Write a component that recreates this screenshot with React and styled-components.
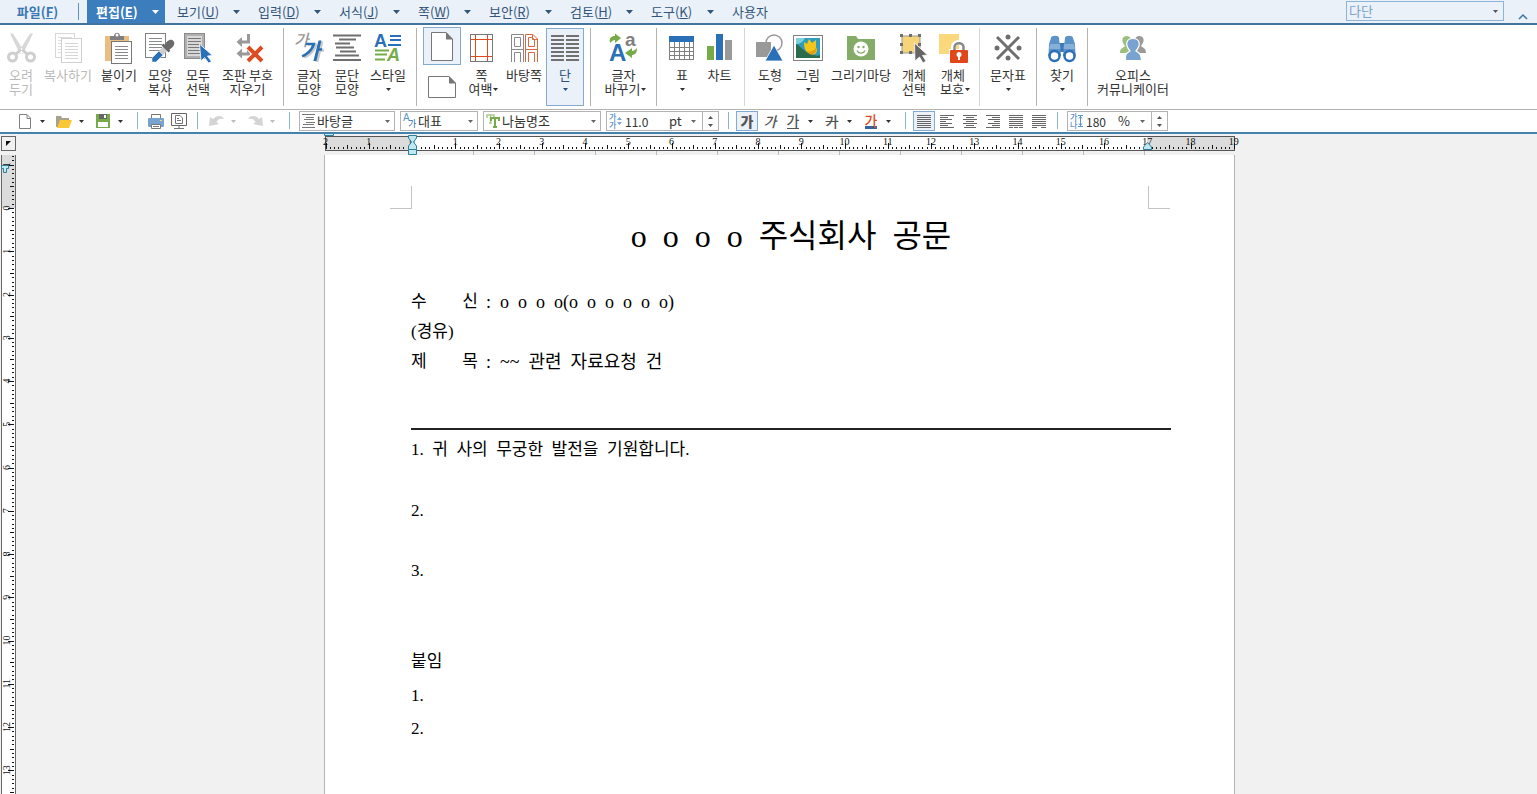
import styled, { createGlobalStyle } from "styled-components";

const GlobalStyle = createGlobalStyle`
    * {
        box-sizing: border-box;
    }
    body {
        margin: 0;
        background: #f1f1f1;
        font-family: "Noto Sans CJK KR", sans-serif;
        font-size: 13px;
        color: #333;
    }
    button, select, input {
        font: inherit;
        color: inherit;
        margin: 0;
        padding: 0;
        border: none;
        background: none;
        border-radius: 0;
        outline: none;
    }
    svg {
        display: block;
        flex: none;
        overflow: visible;
    }
`

const Window = styled.div`
    display: flex;
    flex-direction: column;
    height: 100vh;
    overflow: hidden;
`

/* menu bar */
const MenuBar = styled.nav`
    display: flex;
    height: 25px;
    flex: none;
    background: #eaf1f8;
    border-bottom: 2px solid #41759f;
`
const MenuItem = styled.button`
    display: flex;
    align-items: center;
    justify-content: space-between;
    width: ${p => p.$w || 61}px;
    margin-right: 18px;
    height: 23px;
    line-height: 23px;
    color: #34557a;
    white-space: nowrap;
`
const FileItem = styled.button`
    width: 79px;
    padding-right: 4px;
    margin-right: 8px;
    height: 23px;
    line-height: 23px;
    font-weight: bold;
    color: #3a78b4;
    position: relative;
    &::after {
        content: '';
        position: absolute;
        right: 0;
        top: 3px;
        height: 17px;
        width: 1px;
        background: #5d93c4;
    }
`
const ActiveItem = styled(MenuItem)`
    width: 78px;
    margin-right: 12px;
    padding: 0 6px 0 9px;
    background: #3b7dbd;
    color: #fff;
    font-weight: bold;
`
const StyleBox = styled.div`
    display: flex;
    align-items: center;
    width: 158px;
    height: 20px;
    margin: 1px 14px 0 auto;
    padding: 0 5px 0 2px;
    border: 1px solid #8db4d8;
    color: #7ba3cc;
`
const Collapse = styled.button`
    display: flex;
    align-items: flex-end;
    width: 19px;
    padding: 0 0 3px 0;
`

/* ribbon */
const Ribbon = styled.div`
    display: flex;
    flex: none;
    height: 85px;
    padding: 3px 0 3px 2px;
    background: #fff;
    border-bottom: 1px solid #b3b3b3;
`
const Group = styled.div`
    display: flex;
    flex: none;
    padding: 0 6px;
    border-right: 1px solid ${p => (p.$light ? "#d6d6d6" : "#b3b3b3")};
    &:first-child {
        padding-left: 0;
    }
    &:last-child {
        border-right: none;
    }
`
const RibbonButton = styled.button`
    display: flex;
    flex-direction: column;
    align-items: center;
    width: ${p => p.$w}px;
    height: 78px;
    padding-top: 3px;
    border: 1px solid ${p => (p.$on ? "#84aacf" : "transparent")};
    background: ${p => (p.$on ? "#eaf1f8" : "none")};
    color: ${p => (p.$off ? "#b9b9b9" : p.$on ? "#2c4f7c" : "#333")};
`
const Caption = styled.span`
    display: flex;
    align-items: center;
    height: 14px;
    line-height: 14px;
    white-space: nowrap;
    gap: 1px;
    padding-left: ${p => (p.$inline ? 4 : 0)}px;
    &:first-of-type {
        margin-top: 4px;
    }
`
const PageColumn = styled.div`
    display: flex;
    flex-direction: column;
    gap: 6px;
    margin-top: -1px;
`
const PageButton = styled.button`
    display: flex;
    align-items: center;
    justify-content: center;
    width: 38px;
    height: ${p => (p.$on ? 38 : 32)}px;
    border: 1px solid ${p => (p.$on ? "#84aacf" : "transparent")};
    background: ${p => (p.$on ? "#eaf1f8" : "none")};
`

/* quick toolbar */
const Toolbar = styled.div`
    display: flex;
    flex: none;
    height: 24px;
    background: #fff;
    border-bottom: 2px solid #4482ad;
`
const Tools = styled.div`
    display: flex;
    align-items: center;
    flex: none;
    gap: ${p => (p.$wide ? 5 : 1)}px;
    padding: 0 ${p => (p.$wide ? 9 : 7)}px;
    &:first-child {
        padding-left: 14px;
    }
`
const Rule = styled.span`
    width: 1px;
    height: 17px;
    margin-top: 2px;
    background: #8db4cf;
`
const Split = styled.span`
    display: flex;
    margin-right: 4px;
`
const Tool = styled.button`
    display: flex;
    align-items: center;
    justify-content: center;
    width: 22px;
    height: 20px;
    border: 1px solid ${p => (p.$on ? "#84aacf" : "transparent")};
    background: ${p => (p.$on ? "#eaf1f8" : "none")};
`
const Drop = styled.button`
    display: flex;
    align-items: center;
    justify-content: center;
    width: 12px;
    height: 20px;
`
const Glyph = styled.span`
    display: block;
    line-height: 14px;
    height: ${p => (p.$bar ? 16 : 15)}px;
    font-size: 14px;
    font-weight: ${p => (p.$bold ? 900 : 500)};
    font-style: ${p => (p.$italic ? "italic" : "normal")};
    text-decoration: ${p => (p.$strike ? "line-through" : "none")};
    color: ${p => p.$color || "#555"};
    border-bottom: ${p => p.$bar || "none"};
`
const Combo = styled.div`
    display: flex;
    align-items: center;
    width: ${p => p.$w}px;
    height: 20px;
    padding-left: 2px;
    gap: 2px;
    border: 1px solid #b3b3b3;
`
const Select = styled.select`
    appearance: none;
    flex: 1;
    min-width: 0;
    height: 18px;
    line-height: 18px;
`
const NumberInput = styled.input`
    width: ${p => p.$w}px;
    height: 18px;
    font-size: 12px;
`
const ArrowCell = styled.span`
    display: flex;
    justify-content: center;
    width: 14px;
    flex: none;
`
const Spinner = styled.span`
    display: flex;
    flex-direction: column;
    justify-content: center;
    width: 16px;
    height: 18px;
    flex: none;
    border-left: 1px solid #b3b3b3;
`
const Spin = styled.button`
    display: flex;
    align-items: center;
    justify-content: center;
    height: 8px;
`

/* document area */
const Workspace = styled.main`
    display: flex;
    flex: 1;
    min-height: 0;
    overflow: hidden;
`
const Side = styled.aside`
    width: 17px;
    flex: none;
    padding: 2px 0 0 1px;
`
const Corner = styled.button`
    display: flex;
    align-items: center;
    justify-content: center;
    width: 15px;
    height: 15px;
    margin-bottom: 4px;
    border: 1px solid #666;
`
const Canvas = styled.div`
    flex: 1;
    padding-left: 5px;
    display: flex;
    flex-direction: column;
    align-items: center;
`
const Sheet = styled.div`
    width: 911px;
    flex: 1;
    display: flex;
    flex-direction: column;
`
const Paper = styled.article`
    flex: 1;
    padding: 31px 63px 0 86px;
    background: #fff;
    border: solid #b4b4b4;
    border-width: 0 1px;
    font-family: "Liberation Serif", "Noto Sans CJK KR", serif;
    font-size: 17px;
    line-height: 30px;
    color: #000;
    white-space: pre-wrap;
`
const Marks = styled.div`
    display: flex;
    justify-content: space-between;
    margin: 0 1px 0 -21px;
`
const Mark = styled.span`
    width: 22px;
    height: 23px;
    border: solid #c4c4c4;
    border-width: ${p => (p.$right ? "0 0 1px 1px" : "0 1px 1px 0")};
`
const Title = styled.h1`
    margin: 7px 0 31px;
    font-size: 32px;
    line-height: 40px;
    font-weight: normal;
    text-align: center;
`
const Meta = styled.dl`
    display: grid;
    grid-template-columns: 67px 1fr;
    grid-auto-rows: 30px;
    margin: 0;
`
const Name = styled.dt`
    display: flex;
    justify-content: space-between;
`
const Value = styled.dd`
    margin: 0 0 0 8px;
    font-size: 18px;
`
const Line = styled.hr`
    height: 2px;
    margin: 51px 0 5px;
    border: none;
    background: #222;
`
const Body = styled.p`
    margin: 0 0 ${p => p.$after || 0}px;
`

const Shaded = styled.text`
    filter: drop-shadow(2px 1px 0 #c9c9c9);
`

const Arrow = ({ size = 5, color = "#333", up }) => (
    <svg width={size} height={(size + 1) / 2} viewBox="0 0 10 5" preserveAspectRatio="none">
        <path d={up ? "M0 5L5 0L10 5Z" : "M0 0H10L5 5Z"} fill={color} />
    </svg>
)

const Icon = ({ children }) => (
    <svg width="32" height="32" viewBox="0 0 32 32" fill="none">{children}</svg>
)

// horizontal text lines inside the little page pictures
const Lines = ({ x1, x2, from, count, step = 3, color = "#8a8a8a", w = 1 }) => (
    <path
        d={Array.from({ length: count }, (_, i) => `M${x1} ${from + i * step}H${x2}`).join("")}
        stroke={color}
        strokeWidth={w}
    />
)

const font = { sans: '"Liberation Sans", sans-serif', kr: '"Noto Sans CJK KR", sans-serif' }

const icons = {
    cut: (
        <Icon>
            <path d="M5 1.500L8 1.500L19.500 20L15 22Z M28 1.500L25 1.500L13.500 20L18 22Z" fill="#d8d8d8" />
            <circle cx="7.500" cy="25" r="4" stroke="#cfcfcf" strokeWidth="3" />
            <circle cx="25.500" cy="25" r="4" stroke="#cfcfcf" strokeWidth="3" />
            <path d="M11 22L16.500 17L22 22" stroke="#cfcfcf" strokeWidth="3" />
            <circle cx="16.500" cy="17" r="1" fill="#fff" />
        </Icon>
    ),
    copy: (
        <Icon>
            <rect x="3.500" y="1.500" width="19" height="24" stroke="#d6d6d6" />
            <Lines x1={6} x2={20} from={5.5} count={6} color="#dedede" />
            <rect x="9.500" y="6.500" width="20" height="24" fill="#fff" stroke="#d0d0d0" />
            <Lines x1={13} x2={26} from={11.5} count={6} color="#d6d6d6" />
        </Icon>
    ),
    paste: (
        <Icon>
            <rect x="2" y="4" width="24" height="25" fill="#e9be80" />
            <path d="M7 8V4H11C11 -0.500 17 -0.500 17 4H21V8Z" fill="#808080" />
            <circle cx="14" cy="3" r="1.500" fill="#fff" />
            <rect x="8.500" y="9.500" width="20" height="22" fill="#fff" stroke="#777" />
            <Lines x1={12} x2={25} from={14.5} count={5} />
        </Icon>
    ),
    shapeCopy: (
        <Icon>
            <rect x="1.500" y="1.500" width="20" height="24" fill="#fff" stroke="#808080" />
            <Lines x1={5} x2={18} from={6.5} count={5} />
            <path d="M8 30V26L15 19L19 23L12 30Z" fill="#2a70b8" stroke="#fff" strokeWidth="0.500" />
            <path d="M15 19L20 14L24 18L19 23Z" fill="#cfcfcf" />
            <path d="M18.500 12.500L25.500 19.500" stroke="#666" strokeWidth="2.500" />
            <path d="M20 14C22 9 27 6 29.500 9C32 12 28 17 24 18Z" fill="#6a6a6a" />
        </Icon>
    ),
    selectAll: (
        <Icon>
            <rect x="2.500" y="1.500" width="20" height="25" fill="#b0b0b0" stroke="#8a8a8a" />
            <rect x="5" y="4" width="15" height="20" fill="#d8d8d8" />
            <Lines x1={6} x2={19} from={6.5} count={6} color="#777" />
            <path d="M17.500 12L30.500 23.500L25.500 24L29.500 29.500L26.500 31L22.500 25.500L19 29Z" fill="#2a70b8" stroke="#fff" strokeWidth="0.800" />
        </Icon>
    ),
    clearMarks: (
        <Icon>
            <path d="M16.500 2V10H9 M16.500 17V22H9" stroke="#999" strokeWidth="3" />
            <path d="M10 5V15L4.500 10Z M10 16.500V26.500L4.500 21.500Z" fill="#999" />
            <path d="M16 15L30 29M30 15L16 29" stroke="#fff" strokeWidth="6" />
            <path d="M16 15L30 29M30 15L16 29" stroke="#dd4b22" strokeWidth="4" />
        </Icon>
    ),
    charShape: (
        <Icon>
            <text x="1" y="14" fontFamily={font.kr} fontSize="16" fontWeight="500" fontStyle="italic" fill="#999">가</text>
            <Shaded x="7" y="27" fontFamily={font.kr} fontSize="22" fontWeight="bold" fontStyle="italic" fill="#2a70b8">가</Shaded>
        </Icon>
    ),
    paraShape: (
        <Icon>
            <path d="M2 3.500H30M8 7.500H25M4 11.500H19M5 15.500H23M9 19.500H25M4 23.500H28M2 28H30" stroke="#6f6f6f" strokeWidth="2" />
        </Icon>
    ),
    style: (
        <Icon>
            <text x="2" y="15" fontFamily={font.sans} fontSize="18" fontWeight="bold" fill="#2a70b8">A</text>
            <path d="M18 8H29M18 4H29M16 13H29" stroke="#2a70b8" strokeWidth="2" />
            <path d="M3 18.500H17M3 22.500H15M3 27.500H13" stroke="#77ab4a" strokeWidth="2" />
            <text x="15" y="29" fontFamily={font.sans} fontSize="18" fontWeight="bold" fontStyle="italic" fill="#77ab4a">A</text>
        </Icon>
    ),
    margin: (
        <Icon>
            <rect x="4.500" y="2.500" width="22" height="27" stroke="#777" />
            <path d="M9.500 3V29M21.500 3V29M5 7.500H26M5 24.500H26" stroke="#dd4b22" />
        </Icon>
    ),
    master: (
        <Icon>
            <path d="M3.500 30V17.500H15.500V30M6.500 30V20.500H12.500V30M3.500 2.500H15.500V17.500H3.500ZM6.500 5.500H12.500V14.500H6.500Z" stroke="#8a8a8a" />
            <path d="M17.500 17.500V2.500H25L29.500 7V17.500ZM20.500 14.500V5.500H24.500L26.500 8V14.500ZM24.500 3V7.500H29M17.500 30V17.500H29.500V30M20.500 30V20.500H26.500V30" stroke="#d9683f" />
        </Icon>
    ),
    columns: (
        <Icon>
            <Lines x1={2} x2={15} from={4} count={7} step={4} color="#707070" w={2} />
            <Lines x1={17} x2={30} from={4} count={7} step={4} color="#707070" w={2} />
        </Icon>
    ),
    charChange: (
        <Icon>
            <text x="1" y="29" fontFamily={font.sans} fontSize="24" fontWeight="bold" fill="#2a70b8">A</text>
            <text x="17" y="14" fontFamily={font.sans} fontSize="19" fontWeight="bold" fill="#808080">a</text>
            <path d="M2 11C1 6 3 4 7 4V1.500L13 6L7 11V8C5 8 4 9 2 11Z" fill="#77ab4a" />
            <path d="M29 16C29 21 27 23 24 23V26L17 21L24 16V19C26 19 27 18 29 16Z" fill="#77ab4a" />
        </Icon>
    ),
    table: (
        <Icon>
            <rect x="3.500" y="4.500" width="24" height="23" fill="#fff" stroke="#808080" />
            <path d="M3 15.500H28M3 19.500H28M3 23.500H28M8.500 10V28M13.500 10V28M18.500 10V28M23.500 10V28" stroke="#808080" />
            <rect x="3" y="4" width="25" height="6" fill="#2a70b8" />
        </Icon>
    ),
    chart: (
        <Icon>
            <rect x="3" y="14" width="7" height="14" fill="#77ab4a" />
            <rect x="12" y="2" width="7" height="26" fill="#2a70b8" />
            <rect x="21" y="8" width="7" height="20" fill="#999" />
        </Icon>
    ),
    shapes: (
        <Icon>
            <circle cx="20" cy="11" r="8" stroke="#999" strokeWidth="1.500" fill="#fff" />
            <rect x="2" y="10" width="15" height="15" fill="#999" />
            <path d="M20 13L29 29H11Z" fill="#2a70b8" stroke="#fff" strokeWidth="0.800" />
        </Icon>
    ),
    picture: (
        <Icon>
            <rect x="1.500" y="3.500" width="29" height="25" fill="#fff" stroke="#808080" />
            <rect x="4" y="6" width="24" height="20" fill="#2f9dbd" />
            <path d="M4 26V12C8 13 10 18 15 20C20 22 24 25 28 23V26Z" fill="#2c6b4c" />
            <path d="M4 6H13C11 10 8 12 4 12Z" fill="#7fd0dd" />
            <path d="M12 10L15 12L17 7L20 11L24 8L24 15C27 21 22 24 18 22C13 20 12 15 12 10Z" fill="#f5c518" />
            <path d="M14 18C18 21 22 19 24 16C25 21 21 23 18 22Z" fill="#e59b13" />
        </Icon>
    ),
    gallery: (
        <Icon>
            <path d="M2 4H11L13 7H30V28H2Z" fill="#85ab68" />
            <circle cx="16" cy="17" r="7.500" fill="#fff" />
            <circle cx="13.500" cy="15" r="1.200" fill="#85ab68" />
            <circle cx="18.500" cy="15" r="1.200" fill="#85ab68" />
            <path d="M12 18.500C13.500 22 18.500 22 20 18.500" stroke="#85ab68" strokeWidth="1.300" />
        </Icon>
    ),
    selectObject: (
        <Icon>
            <rect x="4" y="4" width="18" height="17" fill="#f6d47a" stroke="#999" />
            <path d="M2 2H5V5H2ZM11 2H14V5H11ZM20 2H23V5H20ZM2 11H5V14H2ZM20 11H23V14H20ZM2 19H5V22H2ZM11 19H14V22H11Z" fill="#707070" />
            <path d="M16.500 11L29.500 23L24.500 23.500L28 29L25 31L21.500 25L17 29Z" fill="#666" stroke="#fff" strokeWidth="0.800" />
        </Icon>
    ),
    protect: (
        <Icon>
            <rect x="2" y="2" width="20" height="20" fill="#f9d97c" />
            <path d="M16.500 18V15C16.500 9 27.500 9 27.500 15V18" stroke="#fff" strokeWidth="5" />
            <rect x="12" y="17" width="20" height="14" fill="#fff" />
            <path d="M17.500 18V15C17.500 10 26.500 10 26.500 15V18" stroke="#888" strokeWidth="2.500" />
            <rect x="13" y="18" width="18" height="13" rx="1" fill="#e2461b" />
            <circle cx="22" cy="22.500" r="2.500" fill="#fff" />
            <path d="M21 23H23V28H21Z" fill="#fff" />
        </Icon>
    ),
    symbols: (
        <Icon>
            <path d="M5 5L27 27M27 5L5 27" stroke="#6f6f6f" strokeWidth="3" />
            <circle cx="16" cy="5" r="2.500" fill="#6f6f6f" />
            <circle cx="16" cy="26" r="2.500" fill="#6f6f6f" />
            <circle cx="5" cy="16" r="2.500" fill="#6f6f6f" />
            <circle cx="27" cy="16" r="2.500" fill="#6f6f6f" />
        </Icon>
    ),
    find: (
        <Icon>
            <rect x="11" y="11" width="10" height="9" fill="#3f79b5" />
            <path d="M5 6C5 3 13 3 13 6L15 24H2.500L3 12Z M27 6C27 3 19 3 19 6L17 24H29.500L29 12Z" fill="#5b92c8" />
            <path d="M4 12H14L14.500 17H3Z M28 12H18L17.500 17H29Z" fill="#86b0d8" />
            <circle cx="8.500" cy="24" r="5" fill="#fff" stroke="#2a70b8" strokeWidth="2.500" />
            <circle cx="23.500" cy="24" r="5" fill="#fff" stroke="#2a70b8" strokeWidth="2.500" />
        </Icon>
    ),
    people: (
        <Icon>
            <path d="M3 21C3 16 6 16 8 14C3 8 6 4 9.500 4C14 4 16 9 12 14V21Z" fill="#9cc080" />
            <path d="M29 21C29 16 26 16 24 14C29 8 26 4 22.500 4C18 4 16 9 20 14V21Z" fill="#9a9a9a" />
            <path d="M8.500 28.500C8 21 10 21 13 19C7 12 10 6.500 16 6.500C22 6.500 25 12 19 19C22 21 24 21 24.500 28.500Z" fill="#78a2cf" stroke="#fff" strokeWidth="1.200" />
        </Icon>
    ),
}

const ribbon = [
    [
        { icon: "cut", text: ["오려", "두기"], w: 38, off: true },
        { icon: "copy", text: ["복사하기"], w: 56, off: true },
        { icon: "paste", text: ["붙이기"], w: 46, drop: true },
        { icon: "shapeCopy", text: ["모양", "복사"], w: 36 },
        { icon: "selectAll", text: ["모두", "선택"], w: 40 },
        { icon: "clearMarks", text: ["조판 부호", "지우기"], w: 59 },
    ],
    [
        { icon: "charShape", text: ["글자", "모양"], w: 38 },
        { icon: "paraShape", text: ["문단", "모양"], w: 38 },
        { icon: "style", text: ["스타일"], w: 44, drop: true },
    ],
    [
        { pages: true },
        { icon: "margin", text: ["쪽", "여백"], w: 41, drop: true },
        { icon: "master", text: ["바탕쪽"], w: 44 },
        { icon: "columns", text: ["단"], w: 38, drop: true, on: true },
    ],
    [{ icon: "charChange", text: ["글자", "바꾸기"], w: 53, drop: true }],
    [
        { icon: "table", text: ["표"], w: 38, drop: true },
        { icon: "chart", text: ["차트"], w: 37 },
    ],
    [
        { icon: "shapes", text: ["도형"], w: 38, drop: true },
        { icon: "picture", text: ["그림"], w: 38, drop: true },
        { icon: "gallery", text: ["그리기마당"], w: 68 },
        { icon: "selectObject", text: ["개체", "선택"], w: 38 },
        { icon: "protect", text: ["개체", "보호"], w: 40, drop: true },
    ],
    [{ icon: "symbols", text: ["문자표"], w: 44, drop: true }],
    [{ icon: "find", text: ["찾기"], w: 38, drop: true }],
    [{ icon: "people", text: ["오피스", "커뮤니케이터"], w: 78 }],
]
// groups closed by the paler divider
const lightGroups = [4, 5]

const menus = [
    { name: "보기", key: "U", w: 63 },
    { name: "입력", key: "D", w: 63 },
    { name: "서식", key: "J", w: 61 },
    { name: "쪽", key: "W", w: 53 },
    { name: "보안", key: "R", w: 63 },
    { name: "검토", key: "H", w: 63 },
    { name: "도구", key: "K", w: 63 },
]

const PageButtons = () => (
    <PageColumn>
        <PageButton $on aria-label="세로">
            <svg width="22" height="29" viewBox="0 0 22 29">
                <path d="M0.500 0.500H15L21.500 7V28.500H0.500Z" fill="#fff" stroke="#777" />
                <path d="M15 0L22 7.500H15Z" fill="#777" />
            </svg>
        </PageButton>
        <PageButton aria-label="가로">
            <svg width="28" height="22" viewBox="0 0 28 22">
                <path d="M0.500 0.500H21L27.500 7V21.500H0.500Z" fill="#fff" stroke="#777" />
                <path d="M21 0L28 7.500H21Z" fill="#777" />
            </svg>
        </PageButton>
    </PageColumn>
)

const RibbonItem = ({ icon, text, w, drop, on, off }) => (
    <RibbonButton $w={w} $on={on} $off={off} disabled={off}>
        {icons[icon]}
        <Caption>{text[0]}</Caption>
        {(text[1] || drop) && (
            <Caption $inline={text[1] && drop}>
                {text[1]}
                {drop && <Arrow color={on ? "#2c4f7c" : "#333"} />}
            </Caption>
        )}
    </RibbonButton>
)

const small = {
    doc: <svg width="12" height="15" viewBox="0 0 12 15"><path d="M0.500 0.500H8L11.500 4V14.500H0.500ZM8 1V4.500H11.500" fill="#fff" stroke="#808080" /></svg>,
    open: (
        <svg width="16" height="13" viewBox="0 0 16 13">
            <path d="M0 1H5L6 3H13V12H0Z" fill="#a8a28c" />
            <path d="M4 5H16L13 13H1Z" fill="#fbc737" />
        </svg>
    ),
    save: (
        <svg width="14" height="14" viewBox="0 0 14 14">
            <path d="M0 0H14V14H0Z" fill="#77ab4a" />
            <path d="M3 0H11V5H3Z" fill="#666" />
            <path d="M8 1H10V4H8ZM2 8H12V13H2Z" fill="#fff" />
        </svg>
    ),
    print: (
        <svg width="16" height="15" viewBox="0 0 16 15">
            <path d="M3.500 5V0.500H12.500V5" fill="#fff" stroke="#777" />
            <rect y="4" width="16" height="9" rx="1" fill="#78a2cf" />
            <path d="M12 6H14V7H12Z" fill="#fbd76a" />
            <path d="M3.500 10.500H12.500V14.500H3.500Z" fill="#fff" stroke="#777" />
            <path d="M5 12.500H11" stroke="#777" />
        </svg>
    ),
    preview: (
        <svg width="16" height="16" viewBox="0 0 16 16">
            <path d="M0.500 0.500H15.500V12.500H0.500Z" fill="#fff" stroke="#666" />
            <path d="M4.500 2.500H9L11.500 5V10.500H4.500ZM6 5.500H8M6 7.500H10M8 13V15M3 15.500H13" fill="none" stroke="#777" />
        </svg>
    ),
    undo: <svg width="15" height="12" viewBox="0 0 15 12"><path d="M0 11L1 2L4 4C8 0 13 0 15 4C11 3 9 4 7.500 7L10 9Z" fill="#d4d4d4" /></svg>,
    redo: <svg width="15" height="12" viewBox="0 0 15 12"><path d="M15 11L14 2L11 4C7 0 2 0 0 4C4 3 6 4 7.500 7L5 9Z" fill="#d4d4d4" /></svg>,
    para: <svg width="13" height="14" viewBox="0 0 13 14"><path d="M0 0.500H13M4 3.500H12M2 5.500H12M4 8.500H13M1 10.500H12M0 13.500H13" stroke="#777" /></svg>,
    rep: (
        <svg width="13" height="16" viewBox="0 0 13 16">
            <text x="0" y="8" fontFamily={font.sans} fontSize="10" fill="#5b97cf">A</text>
            <text x="5" y="14" fontFamily={font.kr} fontSize="9" fill="#2a70b8">가</text>
        </svg>
    ),
    face: (
        <svg width="14" height="14" viewBox="0 0 14 14">
            <path d="M1 4V1H8V4M4.500 1V9M3 9H6" fill="none" stroke="#a9cc8b" strokeWidth="1.500" />
            <path d="M5 7V4H13V7M9 4V13M7 13H11" fill="none" stroke="#77ab4a" strokeWidth="2" />
        </svg>
    ),
    size: (
        <svg width="14" height="16" viewBox="0 0 14 16">
            <text x="0" y="7" fontFamily={font.kr} fontSize="8" fill="#2a70b8">가</text>
            <text x="0" y="15" fontFamily={font.kr} fontSize="8" fill="#2a70b8">가</text>
            <path d="M8 7L10.500 4L13 7ZM8 9L10.500 12L13 9Z" fill="#78a8d8" />
        </svg>
    ),
    spacing: (
        <svg width="14" height="16" viewBox="0 0 14 16">
            <text x="0" y="7" fontFamily={font.kr} fontSize="8" fill="#2a70b8">가</text>
            <text x="0" y="15" fontFamily={font.kr} fontSize="8" fill="#2a70b8">나</text>
            <path d="M8 2.500H13M8 13.500H13M10.500 3V13M9 5.500L10.500 3.500L12 5.500M9 10.500L10.500 12.500L12 10.500" fill="none" stroke="#5b92c8" />
        </svg>
    ),
}

const aligns = [
    { name: "양쪽 정렬", d: "M0 0.500H14M0 2.500H14M0 4.500H14M0 6.500H14M0 8.500H14M0 10.500H14M0 12.500H14", on: true },
    { name: "왼쪽 정렬", d: "M0 0.500H14M0 2.500H8M0 4.500H12M0 6.500H6M0 8.500H12M0 10.500H8M0 12.500H14" },
    { name: "가운데 정렬", d: "M0 0.500H14M3 2.500H11M0 4.500H14M3 6.500H11M0 8.500H14M3 10.500H11M1 12.500H13" },
    { name: "오른쪽 정렬", d: "M0 0.500H14M6 2.500H14M2 4.500H14M8 6.500H14M2 8.500H14M6 10.500H14M0 12.500H14" },
    { name: "배분 정렬", d: "M0 0.500H14M0 2.500H14M0 4.500H14M0 6.500H14M0 8.500H14M0 10.500H14M0 12.500H4M5 12.500H9M10 12.500H14" },
    { name: "나눔 정렬", d: "M0 0.500H14M0 2.500H14M0 4.500H14M0 6.500H14M0 8.500H14M0 10.500H14M0 12.500H5M9 12.500H14" },
]

const SplitTool = ({ label, children, off }) => (
    <Split>
        <Tool aria-label={label} disabled={off}>{children}</Tool>
        <Drop aria-label={label + " 목록"} disabled={off}><Arrow color={off ? "#bbb" : "#333"} /></Drop>
    </Split>
)

const FontCombo = ({ w, icon, label, value }) => (
    <Combo $w={w}>
        {small[icon]}
        <Select aria-label={label}><option>{value}</option></Select>
        <ArrowCell><Arrow color="#666" /></ArrowCell>
    </Combo>
)

const NumberCombo = ({ w, icon, label, value, unit, inputWidth }) => (
    <Combo $w={w}>
        {small[icon]}
        <NumberInput $w={inputWidth} aria-label={label} defaultValue={value} />
        <Select aria-label={label + " 단위"}><option>{unit}</option></Select>
        <ArrowCell><Arrow color="#666" /></ArrowCell>
        <Spinner>
            <Spin aria-label={label + " 늘리기"}><Arrow up color="#555" /></Spin>
            <Spin aria-label={label + " 줄이기"}><Arrow color="#555" /></Spin>
        </Spinner>
    </Combo>
)

const CM = 43.25

const ticks = (from, to) => {
    const list = []
    for (let i = from; i <= to; i++) {
        list.push({ n: i, at: (i * CM) / 10, len: i % 10 === 0 ? 6 : i % 5 === 0 ? 4 : 2 })
    }
    return list
}

const HorizontalRuler = () => {
    const zero = 88
    return (
        <svg width="920" height="21" viewBox="0 0 920 21" fill="none">
            <rect x="1.500" y="2.500" width="909" height="14" fill="#fff" stroke="#555" />
            <path d="M2 3H88V16H2ZM823 3H910V16H823Z" fill="#dcdcdc" />
            {ticks(-20, 190).map(t => (
                <path key={t.n} d={`M${Math.round(zero + t.at) + 0.5} ${15 - t.len}V15`} stroke="#111" />
            ))}
            {ticks(-20, 190).filter(t => t.n % 10 === 0).map(t => (
                <text key={t.n} x={zero + t.at} y="11" textAnchor="middle" fontFamily='"Liberation Serif", serif' fontSize="10" fill="#111">
                    {Math.abs(t.n / 10)}
                </text>
            ))}
            {Array.from({ length: 12 }, (_, i) => (
                <path key={i} d={`M${Math.round(88 + (i + 1) * 61) + 0.5} 17V21`} stroke="#bbb" />
            ))}
            <path d="M0.500 -0.500H9.500V1.500H0.500Z" fill="#bfe9f2" stroke="#2f7f99" />
            <path d="M84.500 1.500H92.500V4L89.500 8L92.500 12V15.500H84.500V12L87.500 8L84.500 4Z" fill="#bfe9f2" stroke="#2f7f99" />
            <path d="M84.500 15.500H92.500V20.500H84.500Z" fill="#bfe9f2" stroke="#2f7f99" />
            <path d="M819.500 15.500V13L823.500 8.500L827.500 13V15.500Z" fill="#bfe9f2" stroke="#2f7f99" />
        </svg>
    )
}

const VerticalRuler = () => {
    const zero = 53
    return (
        <svg width="15" height="900" viewBox="0 0 15 900" fill="none">
            <rect width="15" height="900" fill="#fff" />
            <rect width="15" height="53" fill="#dcdcdc" />
            <path d="M0.500 0V900M14.500 0V900" stroke="#666" />
            {ticks(-12, 190).map(t => (
                <path key={t.n} d={`M${13 - t.len} ${Math.round(zero + t.at) + 0.5}H13`} stroke="#111" />
            ))}
            {ticks(-12, 140).filter(t => t.n % 10 === 0).map(t => (
                <text key={t.n} x={-(zero + t.at)} y="9" transform="rotate(-90)" textAnchor="middle" fontFamily='"Liberation Serif", serif' fontSize="10" fill="#111">
                    {Math.abs(t.n / 10)}
                </text>
            ))}
            <path d="M0.500 10.500H7.500V13.500H5.500V17.500H2.500V13.500H0.500Z" fill="#bfe9f2" stroke="#2f7f99" />
        </svg>
    )
}

const App = () => {
    return (
        <Window>
            <GlobalStyle />
            <MenuBar>
                <FileItem>파일(<u>F</u>)</FileItem>
                <ActiveItem><span>편집(<u>E</u>)</span><Arrow size={7} color="#fff" /></ActiveItem>
                {menus.map(m => (
                    <MenuItem key={m.key} $w={m.w}>
                        <span>{m.name}(<u>{m.key}</u>)</span>
                        <Arrow size={7} color="#34557a" />
                    </MenuItem>
                ))}
                <MenuItem>사용자</MenuItem>
                <StyleBox>
                    <Select aria-label="찾을 내용"><option>다단</option></Select>
                    <Arrow color="#555" />
                </StyleBox>
                <Collapse aria-label="접기">
                    <svg width="10" height="6" viewBox="0 0 10 6" fill="none">
                        <path d="M1 5L5 1L9 5" stroke="#3e74a4" strokeWidth="1.500" />
                    </svg>
                </Collapse>
            </MenuBar>
            <Ribbon>
                {ribbon.map((group, i) => (
                    <Group key={i} $light={lightGroups.includes(i)}>
                        {group.map(b => b.pages ? <PageButtons key="pages" /> : <RibbonItem key={b.icon} {...b} />)}
                    </Group>
                ))}
            </Ribbon>
            <Toolbar>
                <Tools>
                    <SplitTool label="새 문서">{small.doc}</SplitTool>
                    <SplitTool label="불러오기">{small.open}</SplitTool>
                    <SplitTool label="저장하기">{small.save}</SplitTool>
                </Tools>
                <Rule />
                <Tools>
                    <Tool aria-label="인쇄">{small.print}</Tool>
                    <Tool aria-label="미리 보기">{small.preview}</Tool>
                </Tools>
                <Rule />
                <Tools>
                    <SplitTool label="되돌리기" off>{small.undo}</SplitTool>
                    <SplitTool label="다시 실행" off>{small.redo}</SplitTool>
                </Tools>
                <Rule />
                <Tools $wide>
                    <FontCombo w={96} icon="para" label="스타일" value="바탕글" />
                    <FontCombo w={78} icon="rep" label="언어" value="대표" />
                    <FontCombo w={118} icon="face" label="글꼴" value="나눔명조" />
                    <NumberCombo w={113} icon="size" label="글자 크기" value="11.0" unit="pt" inputWidth={42} />
                </Tools>
                <Rule />
                <Tools>
                    <Tool $on aria-label="진하게"><Glyph $bold>가</Glyph></Tool>
                    <Tool aria-label="기울임"><Glyph $italic>가</Glyph></Tool>
                    <SplitTool label="밑줄"><Glyph $bar="1px solid #555">가</Glyph></SplitTool>
                    <SplitTool label="취소선"><Glyph $strike>가</Glyph></SplitTool>
                    <SplitTool label="글자 색"><Glyph $color="#dd4b22" $bar="3px solid #3463a0">가</Glyph></SplitTool>
                </Tools>
                <Rule />
                <Tools>
                    {aligns.map(a => (
                        <Tool key={a.name} $on={a.on} aria-label={a.name}>
                            <svg width="14" height="13" viewBox="0 0 14 13"><path d={a.d} stroke="#666" /></svg>
                        </Tool>
                    ))}
                </Tools>
                <Rule />
                <Tools $wide>
                    <NumberCombo w={101} icon="spacing" label="줄 간격" value="180" unit="%" inputWidth={30} />
                </Tools>
            </Toolbar>
            <Workspace>
                <Side>
                    <Corner aria-label="탭 종류">
                        <svg width="5" height="5" viewBox="0 0 5 5"><path d="M0 0H5L0 5Z" fill="#111" /></svg>
                    </Corner>
                    <VerticalRuler />
                </Side>
                <Canvas>
                    <Sheet>
                        <HorizontalRuler />
                        <Paper>
                            <Marks><Mark /><Mark $right /></Marks>
                            <Title>{"o  o  o  o  주식회사  공문"}</Title>
                            <Meta>
                                <Name><span>수</span><span>신</span></Name>
                                <Value>{":  o  o  o  o(o  o  o  o  o  o)"}</Value>
                                <Name>(경유)</Name>
                                <Value />
                                <Name><span>제</span><span>목</span></Name>
                                <Value>{":  ~~  관련  자료요청  건"}</Value>
                            </Meta>
                            <Line />
                            <Body $after={31}>{"1.  귀  사의  무궁한  발전을  기원합니다."}</Body>
                            <Body $after={30}>2.</Body>
                            <Body $after={61}>3.</Body>
                            <Body $after={4}>붙임</Body>
                            <Body $after={3}>1.</Body>
                            <Body>2.</Body>
                        </Paper>
                    </Sheet>
                </Canvas>
            </Workspace>
        </Window>
    )
}

export default App;
